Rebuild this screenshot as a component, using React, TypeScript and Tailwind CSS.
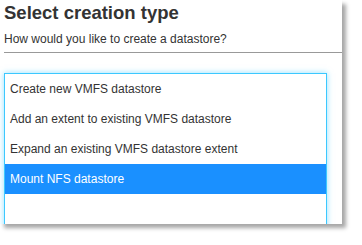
export default function App() {
  const items = [
    'Create new VMFS datastore',
    'Add an extent to existing VMFS datastore',
    'Expand an existing VMFS datastore extent',
    'Mount NFS datastore',
  ];
  const selected = 3;

  return (
    <div className="h-[245px] w-[362px] bg-white font-['Liberation_Sans',Arial,sans-serif]">
      <div className="h-[224px] w-[342px] overflow-hidden bg-white shadow-[4px_4px_4px_rgba(0,0,0,0.35)]">
        <div className="pl-[4px]">
          <h1 className="pt-[1px] text-[18.5px] font-bold leading-[24px] text-[#333]">
            Select creation type
          </h1>
          <p className="mt-[4px] text-[12px] leading-[20px] text-[#333]">
            How would you like to create a datastore?
          </p>
          <div className="mt-[3px] h-px bg-[#999]" />
        </div>

        <div className="ml-[4px] mt-[20px] h-[170px] w-[323px] border border-[#3cc8ff] shadow-[0_0_6px_rgba(60,200,255,0.55)]">
          {items.map((label, i) => (
            <div
              key={label}
              className={
                i === selected
                  ? 'flex h-[30px] items-center bg-[#1a90ff] pl-[5px] text-[12px] text-white'
                  : 'flex h-[30px] items-center pl-[5px] text-[12px] text-[#333]'
              }
            >
              {label}
            </div>
          ))}
        </div>
      </div>
    </div>
  );
}
